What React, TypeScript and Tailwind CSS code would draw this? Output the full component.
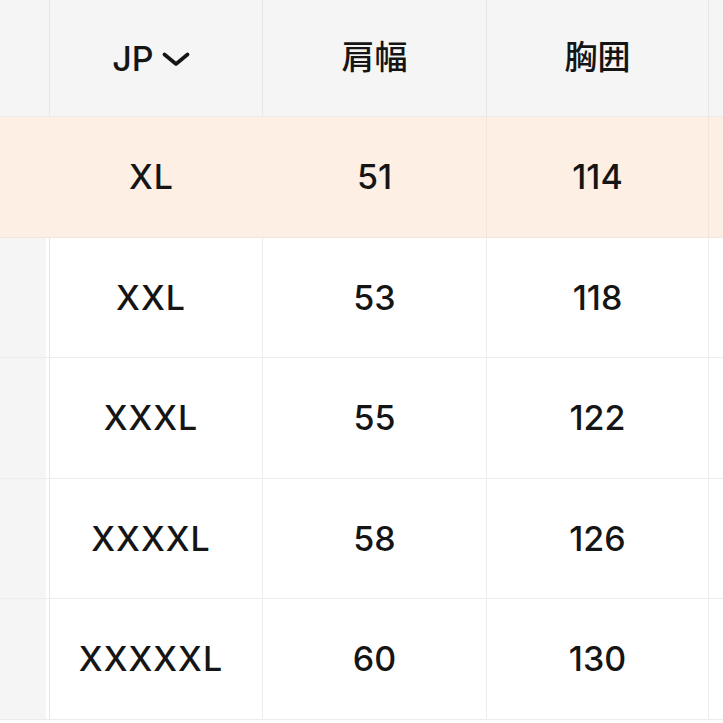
const rows = [
  { jp: "XL", shoulder: "51", chest: "114", active: true },
  { jp: "XXL", shoulder: "53", chest: "118" },
  { jp: "XXXL", shoulder: "55", chest: "122" },
  { jp: "XXXXL", shoulder: "58", chest: "126" },
  { jp: "XXXXXL", shoulder: "60", chest: "130" },
];

const Chevron = () => (
  <svg width="28" height="15" viewBox="0 0 28 15" className="ml-[8px] mt-[2px]">
    <path d="M2.5 2.5 L14 12 L25.5 2.5" fill="none" stroke="#151515" strokeWidth="3.6" strokeLinecap="round" strokeLinejoin="round" />
  </svg>
);

const App = () => {
  return (
    <div
      className="w-[723px] h-[723px] overflow-hidden bg-white text-[#151515] text-[34px] font-medium"
      style={{ fontFamily: 'Inter, "Noto Sans CJK JP", sans-serif' }}
    >
      {/* header */}
      <div className="flex h-[117px] bg-[#f5f5f5] border-b border-[#ebebeb]">
        <div className="w-[50px] shrink-0 border-r border-[#e6e6e6]" />
        <div className="w-[213px] shrink-0 flex items-center justify-center pr-[10px] border-r border-[#e6e6e6]">
          <span>JP</span>
          <Chevron />
        </div>
        <div className="w-[224px] shrink-0 flex items-center justify-center border-r border-[#e6e6e6] text-[33px]">
          肩幅
        </div>
        <div className="w-[222px] shrink-0 flex items-center justify-center border-r border-[#e6e6e6] text-[33px]">
          胸囲
        </div>
        <div className="flex-1" />
      </div>

      {rows.map((r) => (
        <div
          key={r.jp}
          className={`flex h-[120.5px] border-b ${r.active ? "bg-[#fdefe3] border-[#f1e6dc]" : "bg-white border-[#ececec]"}`}
        >
          {r.active ? (
            <div className="w-[50px] shrink-0" />
          ) : (
            <div className="w-[50px] shrink-0 flex border-r border-[#e6e6e6]">
              <div className="w-[46px] bg-[#f5f5f5]" />
            </div>
          )}
          <div
            className={`w-[213px] shrink-0 flex items-center justify-center pr-[10px] tracking-[1px] ${r.active ? "" : "border-r border-[#ececec]"}`}
          >
            {r.jp}
          </div>
          <div
            className={`w-[224px] shrink-0 flex items-center justify-center border-r ${r.active ? "border-[#f1e6dc]" : "border-[#ececec]"}`}
          >
            {r.shoulder}
          </div>
          <div
            className={`w-[222px] shrink-0 flex items-center justify-center border-r ${r.active ? "border-[#f1e6dc]" : "border-[#ececec]"}`}
          >
            {r.chest}
          </div>
          <div className="flex-1" />
        </div>
      ))}
    </div>
  );
};

export default App;
